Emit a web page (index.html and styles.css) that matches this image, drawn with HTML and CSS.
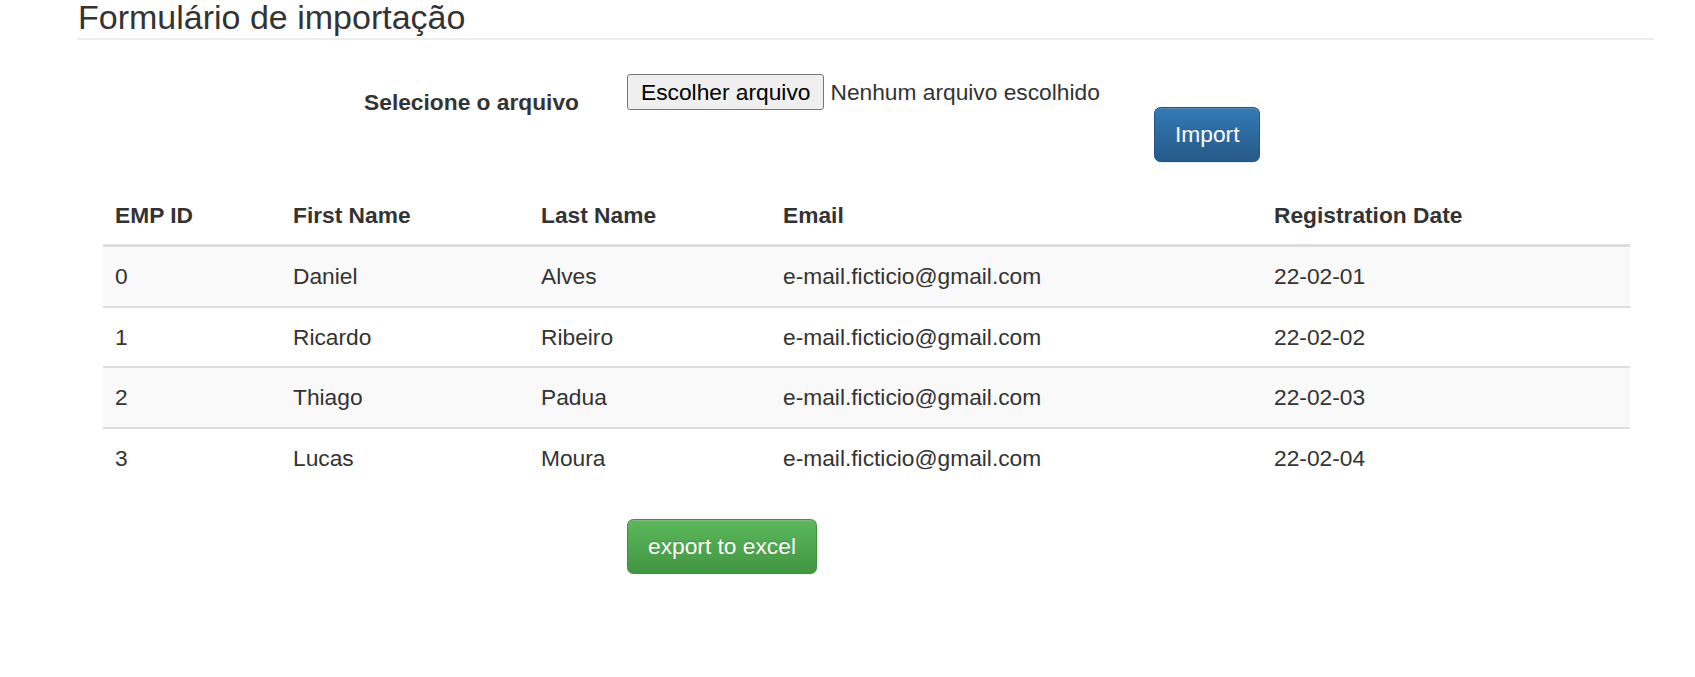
FILE: index.html
```html
<!DOCTYPE html>
<html lang="pt-BR">
<head>
<meta charset="utf-8">
<title>Formulário de importação</title>
<link rel="stylesheet" href="styles.css">
</head>
<body>
<div class="page">
  <h1 class="page-header">Formulário de importação</h1>
  <form class="import-form">
    <label class="form-label" for="file">Selecione o arquivo</label>
    <div class="file-field" id="file">
      <span class="file-btn">Escolher arquivo</span>
      <span class="file-name">Nenhum arquivo escolhido</span>
    </div>
    <button type="button" class="btn btn-primary btn-import">Import</button>
  </form>
  <table class="data-table">
    <colgroup>
      <col class="c-id"><col class="c-first"><col class="c-last"><col class="c-email"><col class="c-date">
    </colgroup>
    <thead>
      <tr><th>EMP ID</th><th>First Name</th><th>Last Name</th><th>Email</th><th>Registration Date</th></tr>
    </thead>
    <tbody>
      <tr><td>0</td><td>Daniel</td><td>Alves</td><td>e-mail.ficticio@gmail.com</td><td>22-02-01</td></tr>
      <tr><td>1</td><td>Ricardo</td><td>Ribeiro</td><td>e-mail.ficticio@gmail.com</td><td>22-02-02</td></tr>
      <tr><td>2</td><td>Thiago</td><td>Padua</td><td>e-mail.ficticio@gmail.com</td><td>22-02-03</td></tr>
      <tr><td>3</td><td>Lucas</td><td>Moura</td><td>e-mail.ficticio@gmail.com</td><td>22-02-04</td></tr>
    </tbody>
  </table>
  <div class="export-row">
    <button type="button" class="btn btn-success">export to excel</button>
  </div>
</div>
</body>
</html>
```

FILE: styles.css
```css
* { box-sizing: border-box; }

html, body {
  margin: 0;
  padding: 0;
  background: #fff;
}

body {
  font-family: "Liberation Sans", Arial, Helvetica, sans-serif;
  font-size: 22.75px;
  line-height: 32.5px;
  color: #333;
}

.page {
  margin-left: 77px;
  width: 1577px;
}

.page-header {
  margin: 0;
  padding: 0 0 0 1px;
  height: 40px;
  font-size: 34px;
  font-weight: normal;
  line-height: 34px;
  color: #333;
  border-bottom: 2px solid #eee;
}

.import-form {
  display: flex;
  align-items: flex-start;
  margin: 34px 0 0 0;
}

.form-label {
  width: 502px;
  padding-top: 11.5px;
  text-align: right;
  font-weight: bold;
}

.file-field {
  display: flex;
  align-items: center;
  width: 479px;
  height: 36px;
  margin-left: 48px;
}

.file-btn {
  display: flex;
  align-items: center;
  height: 36px;
  padding: 0 13px;
  background: #efefef;
  border: 1px solid #767676;
  border-radius: 3px;
  color: #000;
  line-height: 26px;
  white-space: nowrap;
}

.file-name {
  margin-left: 6px;
  white-space: nowrap;
  color: #333;
}

.btn {
  display: inline-block;
  margin: 0;
  padding: 10px 20px;
  font-family: inherit;
  font-size: 22.75px;
  line-height: 32.5px;
  color: #fff;
  border: 1px solid transparent;
  border-radius: 6.5px;
  text-shadow: 0 -1px 0 rgba(0, 0, 0, .2);
  box-shadow: inset 0 1px 0 rgba(255, 255, 255, .15), 0 1px 1px rgba(0, 0, 0, .075);
  cursor: pointer;
  white-space: nowrap;
}

.btn-primary {
  background-color: #265a88;
  background-image: linear-gradient(to bottom, #337ab7 0, #265a88 100%);
  border-color: #245580;
}

.btn-success {
  background-color: #419641;
  background-image: linear-gradient(to bottom, #5cb85c 0, #419641 100%);
  border-color: #3e8f3e;
}

.btn-import {
  margin-left: 48px;
  margin-top: 33px;
}

.data-table {
  margin: 24px 0 0 26px;
  width: 1527px;
  border-collapse: collapse;
  border-spacing: 0;
  table-layout: fixed;
}

.c-id { width: 178px; }
.c-first { width: 248px; }
.c-last { width: 242px; }
.c-email { width: 491px; }
.c-date { width: 368px; }

.data-table th,
.data-table td {
  padding: 13px 12px;
  text-align: left;
  line-height: 32.5px;
  vertical-align: top;
}

.data-table th {
  font-weight: bold;
  border-bottom: 3px solid #ddd;
}

.data-table td {
  border-top: 2px solid #ddd;
}

.data-table tbody tr:first-child td {
  border-top: 0;
}

.data-table tbody tr:nth-child(odd) {
  background: #f9f9f9;
}

.export-row {
  margin-top: 32px;
  padding-left: 550px;
}
```
